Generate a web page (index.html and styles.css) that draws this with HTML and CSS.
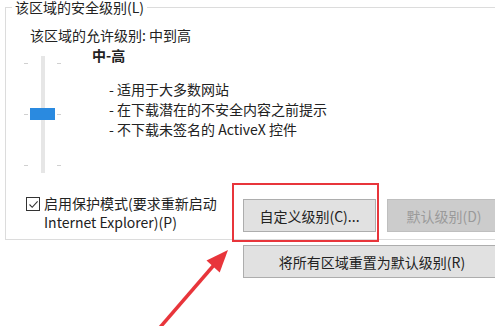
FILE: index.html
```html
<!DOCTYPE html>
<html lang="zh-CN">
<head>
    <meta charset="UTF-8">
    <meta name="viewport" content="width=device-width, initial-scale=1.0">
    <title>安全级别</title>
    <link rel="stylesheet" href="styles.css">
</head>
<body>
    <!-- Security level group -->
    <fieldset class="zone">
        <legend>该区域的安全级别(L)</legend>
        <div class="allowed">该区域的允许级别: 中到高</div>

        <div class="level">
            <div class="slider" aria-label="安全级别">
                <div class="ticks">
                    <span></span><span></span><span></span>
                </div>
                <div class="track">
                    <div class="thumb"></div>
                </div>
                <div class="ticks">
                    <span></span><span></span><span></span>
                </div>
            </div>
            <div class="level-info">
                <div class="level-name">中-高</div>
                <ul class="level-list">
                    <li>- 适用于大多数网站</li>
                    <li>- 在下载潜在的不安全内容之前提示</li>
                    <li>- 不下载未签名的 ActiveX 控件</li>
                </ul>
            </div>
        </div>

        <div class="bottom-row">
            <label class="protect">
                <span class="checkbox">
                    <svg width="11" height="11" viewBox="0 0 11 11">
                        <path d="M1.5 5.5 L4.2 8.3 L9.6 2.4" fill="none" stroke="#333" stroke-width="1.1"/>
                    </svg>
                </span>
                <span class="protect-text">启用保护模式(要求重新启动<br>Internet Explorer)(P)</span>
            </label>
            <div class="btn-group">
                <button class="btn btn-custom">自定义级别(C)...</button>
                <button class="btn btn-default" disabled>默认级别(D)</button>
            </div>
        </div>
    </fieldset>

    <button class="btn btn-reset">将所有区域重置为默认级别(R)</button>

    <!-- Annotation -->
    <div class="highlight"></div>
    <svg class="arrow" width="495" height="326" viewBox="0 0 495 326">
        <line x1="156" y1="332" x2="214" y2="265" stroke="#e8353b" stroke-width="3.5"/>
        <polygon points="228,250 206.5,260.5 219.7,272.5" fill="#e8353b"/>
    </svg>
</body>
</html>
```

FILE: styles.css
```css
* {
    margin: 0;
    padding: 0;
    box-sizing: border-box;
}

body {
    width: 495px;
    height: 326px;
    overflow: hidden;
    background-color: #ffffff;
    color: #222;
    font-family: "Noto Sans CJK SC", "Noto Sans", sans-serif;
    font-size: 14px;
    line-height: 20px;
    position: relative;
}

/* Group box */
.zone {
    margin-left: 5px;
    width: 560px;
    border: 1px solid #dcdcdc;
    padding: 0 0 7px 0;
}

.zone legend {
    margin-left: 6px;
    padding: 0 3px;
    line-height: 15px;
}

.allowed {
    margin: 10px 0 0 24px;
}

/* Level row */
.level {
    display: flex;
}

.slider {
    display: flex;
    margin: 11px 0 0 18px;
    height: 117px;
}

.ticks {
    display: flex;
    flex-direction: column;
    justify-content: space-between;
    padding: 7px 0;
    width: 4px;
}

.ticks span {
    display: block;
    height: 1px;
    background-color: #d0d0d0;
}

.track {
    position: relative;
    width: 4px;
    margin: 0 12px 0 13px;
    background-color: #e6e6e6;
}

.thumb {
    position: absolute;
    top: 52px;
    left: -11px;
    width: 25px;
    height: 12px;
    background-color: #2a8ae0;
}

.level-info {
    margin-left: 31px;
}

.level-name {
    font-weight: bold;
}

.level-list {
    list-style: none;
    margin: 14px 0 0 17px;
}

/* Checkbox + buttons */
.bottom-row {
    display: flex;
    align-items: flex-start;
    margin-top: 21px;
}

.protect {
    display: flex;
    align-items: flex-start;
    gap: 4px;
    width: 217px;
    margin-left: 20px;
    line-height: 19px;
}

.checkbox {
    display: flex;
    align-items: center;
    justify-content: center;
    width: 14px;
    height: 14px;
    margin-top: 3px;
    border: 1px solid #333;
}

.btn-group {
    display: flex;
    gap: 11px;
    margin-top: 5px;
}

.btn {
    font-family: inherit;
    font-size: 14px;
    color: #222;
    height: 33px;
    background-color: #e1e1e1;
    border: 1px solid #adadad;
}

.btn-custom {
    width: 133px;
}

.btn-default {
    width: 114px;
    background-color: #cccccc;
    border-color: #bfbfbf;
    color: #9a9a9a;
}

.btn-reset {
    display: block;
    width: 258px;
    margin: 5px 0 0 243px;
}

/* Annotation overlay */
.highlight {
    position: absolute;
    left: 232px;
    top: 183px;
    width: 147px;
    height: 59px;
    border: 2px solid #e8353b;
}

.arrow {
    position: absolute;
    left: 0;
    top: 0;
}
```
